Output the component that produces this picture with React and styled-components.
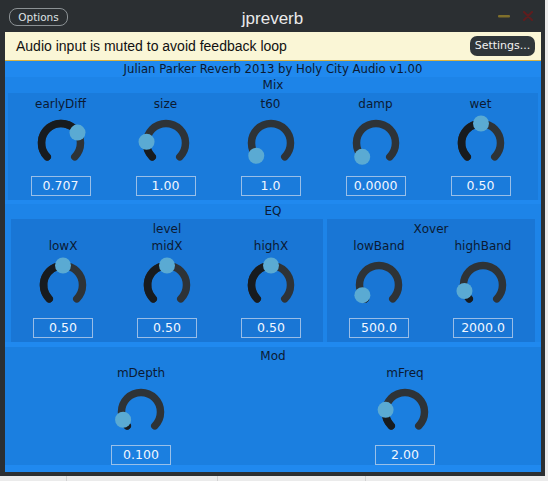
import React from "react";
import styled, { createGlobalStyle } from "styled-components";

const GlobalStyle = createGlobalStyle`
  html, body {
    margin: 0;
    padding: 0;
    overflow: hidden;
  }
  body {
    width: 548px;
    height: 481px;
    background-color: #ebebeb;
    background-image:
      linear-gradient(#d2d2d2, #d2d2d2),
      linear-gradient(#d2d2d2, #d2d2d2),
      linear-gradient(#d2d2d2, #d2d2d2);
    background-size: 1px 481px;
    background-position: 66px 0, 217px 0, 365px 0;
    background-repeat: no-repeat;
    font-family: "DejaVu Sans", Verdana, sans-serif;
  }
`;

const Window = styled.div`
  width: 545px;
  height: 476px;
  background: #2b2f32;
  display: flex;
  flex-direction: column;
`;

const TitleBar = styled.div`
  height: 32px;
  display: grid;
  grid-template-columns: 1fr auto 1fr;
  align-items: center;
  padding: 0 9px;
`;

const OptionsButton = styled.button`
  justify-self: start;
  margin-top: 1px;
  width: 59px;
  height: 18px;
  border: 1px solid #8b9194;
  border-radius: 8px;
  background: transparent;
  color: #dfe2e4;
  font-family: "DejaVu Sans", sans-serif;
  font-size: 10.5px;
  padding: 0;
`;

const WindowTitle = styled.div`
  padding-top: 6px;
  color: #e9eaeb;
  font-family: "Liberation Sans", Arial, sans-serif;
  font-size: 17px;
`;

const WindowControls = styled.div`
  justify-self: end;
  display: flex;
  align-items: center;
  gap: 13px;
  margin-right: 3px;
`;

const Body = styled.div`
  flex: 1;
  margin: 0 4px 4px 5px;
  display: flex;
  flex-direction: column;
`;

const Notice = styled.div`
  height: 28px;
  background: #faf6d6;
  border-bottom: 1px solid #d9b444;
  display: flex;
  align-items: center;
  justify-content: space-between;
  padding: 0 6px 0 11px;
`;

const NoticeText = styled.span`
  color: #111;
  font-family: "Liberation Sans", Arial, sans-serif;
  font-size: 14px;
`;

const SettingsButton = styled.button`
  width: 65px;
  height: 20px;
  border: none;
  border-radius: 7px;
  background: #2f3639;
  color: #f2f2f2;
  font-family: "DejaVu Sans", sans-serif;
  font-size: 11px;
  padding: 0;
  margin-top: -1px;
`;

const Plugin = styled.div`
  flex: 1;
  background: #2089ef;
  display: flex;
  flex-direction: column;
`;

const PluginTitle = styled.div`
  height: 16px;
  line-height: 16px;
  text-align: center;
  color: #0b1a33;
  font-size: 11.7px;
`;

const Group = styled.div`
  background: ${(p) => p.$bg || "#1d84e8"};
  margin-top: ${(p) => p.$top || 0}px;
  padding: ${(p) => p.$pad || "0"};
  display: flex;
  flex-direction: column;
`;

const GroupLabel = styled.div`
  height: ${(p) => p.$h || 16}px;
  line-height: ${(p) => p.$h || 16}px;
  text-align: center;
  color: #0b1a33;
  font-size: 12px;
`;

const Row = styled.div`
  display: flex;
  gap: 4px;
`;

const Panel = styled.div`
  background: ${(p) => p.$bg || "#1a7bdb"};
  padding: ${(p) => p.$pad || "3px 0 4px"};
  display: flex;
  flex-direction: column;
`;

const Knobs = styled.div`
  display: grid;
  grid-template-columns: repeat(${(p) => p.$cols}, ${(p) => p.$w}px);
`;

const KnobCell = styled.div`
  display: flex;
  flex-direction: column;
  align-items: center;
`;

const KnobLabel = styled.div`
  height: 16px;
  line-height: 16px;
  color: #0b1a33;
  font-size: 12px;
  margin-bottom: 6px;
`;

const Dial = styled.svg`
  width: 50px;
  height: 50px;
  overflow: visible;
`;

const ValueBox = styled.div`
  margin-top: 8px;
  width: 58px;
  height: 18px;
  line-height: 18px;
  border: 1px solid rgba(196, 214, 236, 0.75);
  color: #f1f6ff;
  font-size: 12.5px;
  text-align: center;
`;

const polar = (deg, r) => {
  const a = (deg * Math.PI) / 180;
  return [25 + r * Math.cos(a), 25 - r * Math.sin(a)];
};

const arc = (from, to, r) => {
  const [x0, y0] = polar(from, r);
  const [x1, y1] = polar(to, r);
  const large = from - to > 180 ? 1 : 0;
  return `M${x0.toFixed(2)} ${y0.toFixed(2)} A${r} ${r} 0 ${large} 1 ${x1.toFixed(2)} ${y1.toFixed(2)}`;
};

function Knob({ label, value, frac }) {
  const r = 19.5;
  const end = 225 - 270 * frac;
  const [tx, ty] = polar(end, r);
  return (
    <KnobCell>
      <KnobLabel>{label}</KnobLabel>
      <Dial viewBox="0 0 50 50">
        <path d={arc(225, -45, r)} stroke="#2e3337" strokeWidth="7.5" fill="none" strokeLinecap="round" />
        {frac > 0.005 && (
          <path d={arc(225, end, r)} stroke="#171b1f" strokeWidth="7.5" fill="none" strokeLinecap="round" />
        )}
        <circle cx={tx} cy={ty} r="8" fill="#5aaad3" />
      </Dial>
      <ValueBox>{value}</ValueBox>
    </KnobCell>
  );
}

const mix = [
  { label: "earlyDiff", value: "0.707", frac: 0.714 },
  { label: "size", value: "1.00", frac: 0.18 },
  { label: "t60", value: "1.0", frac: 0.015 },
  { label: "damp", value: "0.0000", frac: 0 },
  { label: "wet", value: "0.50", frac: 0.5 },
];

const level = [
  { label: "lowX", value: "0.50", frac: 0.5 },
  { label: "midX", value: "0.50", frac: 0.5 },
  { label: "highX", value: "0.50", frac: 0.5 },
];

const xover = [
  { label: "lowBand", value: "500.0", frac: 0.05 },
  { label: "highBand", value: "2000.0", frac: 0.1 },
];

const mod = [
  { label: "mDepth", value: "0.100", frac: 0.08 },
  { label: "mFreq", value: "2.00", frac: 0.19 },
];

export default function App() {
  return (
    <>
      <GlobalStyle />
      <Window>
        <TitleBar>
          <OptionsButton>Options</OptionsButton>
          <WindowTitle>jpreverb</WindowTitle>
          <WindowControls>
            <svg width="12" height="4" viewBox="0 0 12 4">
              <rect x="0" y="1" width="12" height="2.5" rx="1" fill="#7f6f2b" />
            </svg>
            <svg width="10" height="10" viewBox="0 0 10 10">
              <path d="M1 1 L9 9 M9 1 L1 9" stroke="#5e1d1f" strokeWidth="2.2" strokeLinecap="round" />
            </svg>
          </WindowControls>
        </TitleBar>
        <Body>
          <Notice>
            <NoticeText>Audio input is muted to avoid feedback loop</NoticeText>
            <SettingsButton>Settings...</SettingsButton>
          </Notice>
          <Plugin>
            <PluginTitle>Julian Parker Reverb 2013 by Holy City Audio v1.00</PluginTitle>
            <Group $pad="0 3px">
              <GroupLabel>Mix</GroupLabel>
              <Panel>
                <Knobs $cols={5} $w={105}>
                  {mix.map((k) => (
                    <Knob key={k.label} {...k} />
                  ))}
                </Knobs>
              </Panel>
            </Group>
            <Group $top={4} $pad="0 6px">
              <GroupLabel $h={15}>EQ</GroupLabel>
              <Row>
                <Panel $bg="#1976d5" $pad="2px 0 4px">
                  <GroupLabel $h={17}>level</GroupLabel>
                  <Knobs $cols={3} $w={104}>
                    {level.map((k) => (
                      <Knob key={k.label} {...k} />
                    ))}
                  </Knobs>
                </Panel>
                <Panel $bg="#1976d5" $pad="2px 0 4px">
                  <GroupLabel $h={17}>Xover</GroupLabel>
                  <Knobs $cols={2} $w={104}>
                    {xover.map((k) => (
                      <Knob key={k.label} {...k} />
                    ))}
                  </Knobs>
                </Panel>
              </Row>
            </Group>
            <Group $top={5} $bg="#1b7fe0" $pad="0 4px">
              <GroupLabel $h={18}>Mod</GroupLabel>
              <Knobs $cols={2} $w={264}>
                {mod.map((k) => (
                  <Knob key={k.label} {...k} />
                ))}
              </Knobs>
            </Group>
          </Plugin>
        </Body>
      </Window>
    </>
  );
}
